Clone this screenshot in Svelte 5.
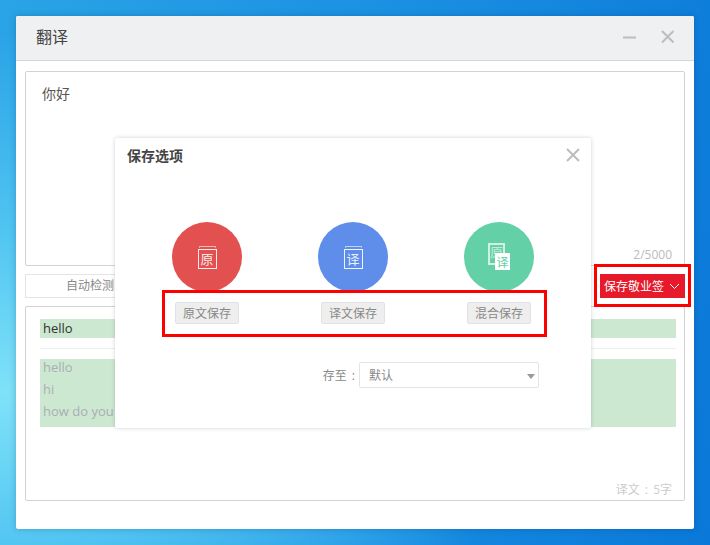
<script>
  const options = [
    { label: '原文保存', color: '#e25050', glyph: '原' },
    { label: '译文保存', color: '#5e8eea', glyph: '译' },
    { label: '混合保存', color: '#64d0a8', glyph: '', mixed: true }
  ];
  const lines = ['hello', 'hi', 'how do you do'];
</script>

<div class="desktop">
  <div class="window">
    <header class="titlebar">
      <span class="title">翻译</span>
      <svg class="min" width="14" height="14" viewBox="0 0 14 14"><path d="M0 7.5h13" stroke="#bdbdbd" stroke-width="2" /></svg>
      <svg class="close" width="15" height="15" viewBox="0 0 15 15"><path d="M2 2l11.500 11.500M13.500 2L2 13.500" stroke="#bdbdbd" stroke-width="2" /></svg>
    </header>

    <div class="body">
      <section class="source">
        <p>你好</p>
        <span class="count">2/5000</span>
      </section>

      <div class="toolbar">
        <div class="lang">自动检测</div>
        <button class="save-note">保存敬业签
          <svg width="11" height="7" viewBox="0 0 11 7"><path d="M1 1l4.500 4.500L10 1" fill="none" stroke="#fff" stroke-width="1" /></svg>
        </button>
      </div>

      <section class="target">
        <div class="mark first">hello</div>
        <div class="rule"></div>
        <div class="mark list">
          {#each lines as line}
            <div>{line}</div>
          {/each}
        </div>
        <span class="words">译文 <em>:</em> 5字</span>
      </section>
    </div>
  </div>

  <div class="modal">
    <div class="modal-head">
      <strong>保存选项</strong>
      <svg width="14" height="14" viewBox="0 0 14 14"><path d="M1 1l12 12M13 1L1 13" stroke="#bdbdbd" stroke-width="2" /></svg>
    </div>
    <div class="choices">
      {#each options as o}
        <div class="choice">
          <div class="circle" style="background: {o.color}">
            {#if o.mixed}
              <div class="book back">原</div>
              <div class="book front">译</div>
            {:else}
              <div class="book"><i></i>{o.glyph}</div>
            {/if}
          </div>
          <span class="tag">{o.label}</span>
        </div>
      {/each}
    </div>
    <div class="save-to">
      <label for="folder">存至 <em>:</em></label>
      <div class="select" id="folder">默认<b></b></div>
    </div>
  </div>

  <div class="outline a"></div>
  <div class="outline b"></div>
</div>

<style>
  :global(body) {
    margin: 0;
  }

  em {
    font-style: normal;
    margin: 0 2px;
  }

  .desktop {
    position: relative;
    width: 710px;
    height: 545px;
    overflow: hidden;
    padding: 16px;
    box-sizing: border-box;
    font-family: "Open Sans", "Noto Sans CJK SC", sans-serif;
    background:
      radial-gradient(ellipse 520px 360px at 0% 72%, #7fe2f8 0%, rgba(90, 205, 245, 0.8) 45%, rgba(40, 160, 235, 0) 100%),
      linear-gradient(100deg, #2aa4e6 0%, #1a90e2 50%, #0a78d8 100%);
  }

  .window {
    height: 513px;
    background: #fff;
    border-radius: 2px;
    box-shadow: 0 0 6px rgba(0, 40, 90, 0.25);
    display: flex;
    flex-direction: column;
  }

  .titlebar {
    flex: none;
    height: 41px;
    padding: 0 19px 3px 20px;
    background: #eff0f2;
    border-bottom: 1px solid #d5d5da;
    display: flex;
    align-items: center;
    border-radius: 2px 2px 0 0;
  }

  .title {
    font-size: 16px;
    line-height: 24px;
    color: #444;
    flex: 1;
  }

  .min {
    margin-right: 23px;
  }

  .body {
    padding: 10px 9px 0;
    display: flex;
    flex-direction: column;
    gap: 8px;
  }

  .source {
    position: relative;
    height: 193px;
    border: 1px solid #d2d2d2;
    border-radius: 2px;
  }

  .source p {
    margin: 0;
    padding: 13px 16px;
    font-size: 14px;
    line-height: 18px;
    color: #555;
  }

  .count {
    position: absolute;
    right: 12px;
    bottom: 2px;
    font-size: 12px;
    line-height: 16px;
    color: #bbb;
  }

  .toolbar {
    display: flex;
    justify-content: space-between;
    height: 24px;
  }

  .lang {
    width: 130px;
    box-sizing: border-box;
    border: 1px solid #e4e4e4;
    font-size: 12px;
    line-height: 22px;
    color: #888;
    text-align: center;
  }

  .save-note {
    width: 85px;
    height: 24px;
    border: none;
    padding: 0 0 0 4px;
    background: #e61a2b;
    color: #fff;
    font-family: inherit;
    font-size: 12px;
    display: flex;
    align-items: center;
    gap: 5px;
    white-space: nowrap;
  }

  .target {
    position: relative;
    height: 181px;
    border: 1px solid #d2d2d2;
    border-radius: 2px;
    padding: 12px 8px 0 14px;
  }

  .mark {
    background: #cde8d1;
    padding: 0 3px;
    font-size: 13px;
  }

  .first {
    height: 19px;
    line-height: 19px;
    color: #333;
  }

  .rule {
    height: 1px;
    background: #eee;
    margin: 10px 0;
  }

  .list {
    height: 68px;
    line-height: 22px;
    color: #aaadb5;
  }

  .list div {
    position: relative;
    top: -3px;
  }

  .words {
    position: absolute;
    right: 12px;
    bottom: 2px;
    font-size: 12px;
    line-height: 16px;
    color: #ccc;
  }

  .modal {
    position: absolute;
    left: 115px;
    top: 138px;
    width: 476px;
    height: 290px;
    background: #fff;
    border-radius: 2px;
    box-shadow: 0 0 4px rgba(0, 0, 0, 0.18);
  }

  .modal-head {
    display: flex;
    justify-content: space-between;
    padding: 9px 11px 0 12px;
    height: 75px;
  }

  .modal-head strong {
    font-size: 14px;
    line-height: 18px;
    color: #444;
  }

  .modal-head svg {
    margin-top: 1px;
  }

  .choices {
    display: flex;
    justify-content: center;
    gap: 76px;
  }

  .choice {
    width: 70px;
    display: flex;
    flex-direction: column;
    align-items: center;
    gap: 10px;
  }

  .circle {
    position: relative;
    width: 70px;
    height: 70px;
    border-radius: 50%;
    display: flex;
    align-items: center;
    justify-content: center;
  }

  .book {
    position: relative;
    width: 19px;
    height: 20px;
    margin-top: 4px;
    box-sizing: border-box;
    border: 1px solid rgba(255, 255, 255, 0.9);
    font-size: 13px;
    line-height: 18px;
    text-align: center;
    color: rgba(255, 255, 255, 0.9);
  }

  .book i {
    position: absolute;
    left: 0;
    right: 0;
    top: -4px;
    height: 2px;
    border-top: 1px solid rgba(255, 255, 255, 0.6);
    border-left: 1px solid rgba(255, 255, 255, 0.4);
    border-right: 1px solid rgba(255, 255, 255, 0.4);
    box-sizing: border-box;
  }

  .back {
    position: absolute;
    left: 24px;
    top: 21px;
    margin: 0;
    width: 17px;
    height: 22px;
    border-width: 2px;
    border-color: rgba(255, 255, 255, 0.7);
    color: rgba(255, 255, 255, 0.6);
    line-height: 14px;
  }

  .front {
    position: absolute;
    left: 31px;
    top: 31px;
    margin: 0;
    width: 15px;
    height: 17px;
    border: none;
    background: #fff;
    color: #64d0a8;
    font-size: 12px;
    line-height: 19px;
  }

  .tag {
    width: 64px;
    height: 22px;
    flex: none;
    box-sizing: border-box;
    background: #eee;
    border: 1px solid #e2e2e2;
    border-radius: 2px;
    font-size: 12px;
    line-height: 21px;
    text-align: center;
    color: #888;
  }

  .save-to {
    display: flex;
    align-items: center;
    justify-content: flex-end;
    margin-top: 38px;
    padding-right: 52px;
    font-size: 12px;
    color: #888;
  }

  .select {
    position: relative;
    width: 180px;
    height: 26px;
    margin-left: 2px;
    box-sizing: border-box;
    border: 1px solid #e4e4e4;
    border-radius: 2px;
    padding-left: 9px;
    line-height: 25px;
  }

  .select b {
    position: absolute;
    right: 3px;
    top: 11px;
    border: 4px solid transparent;
    border-top: 5px solid #999;
    border-bottom: none;
  }

  .outline {
    position: absolute;
    border: 3px solid #f00;
    box-sizing: border-box;
    pointer-events: none;
  }

  .outline.a {
    left: 162px;
    top: 290px;
    width: 385px;
    height: 47px;
  }

  .outline.b {
    left: 594px;
    top: 264px;
    width: 97px;
    height: 43px;
  }
</style>
